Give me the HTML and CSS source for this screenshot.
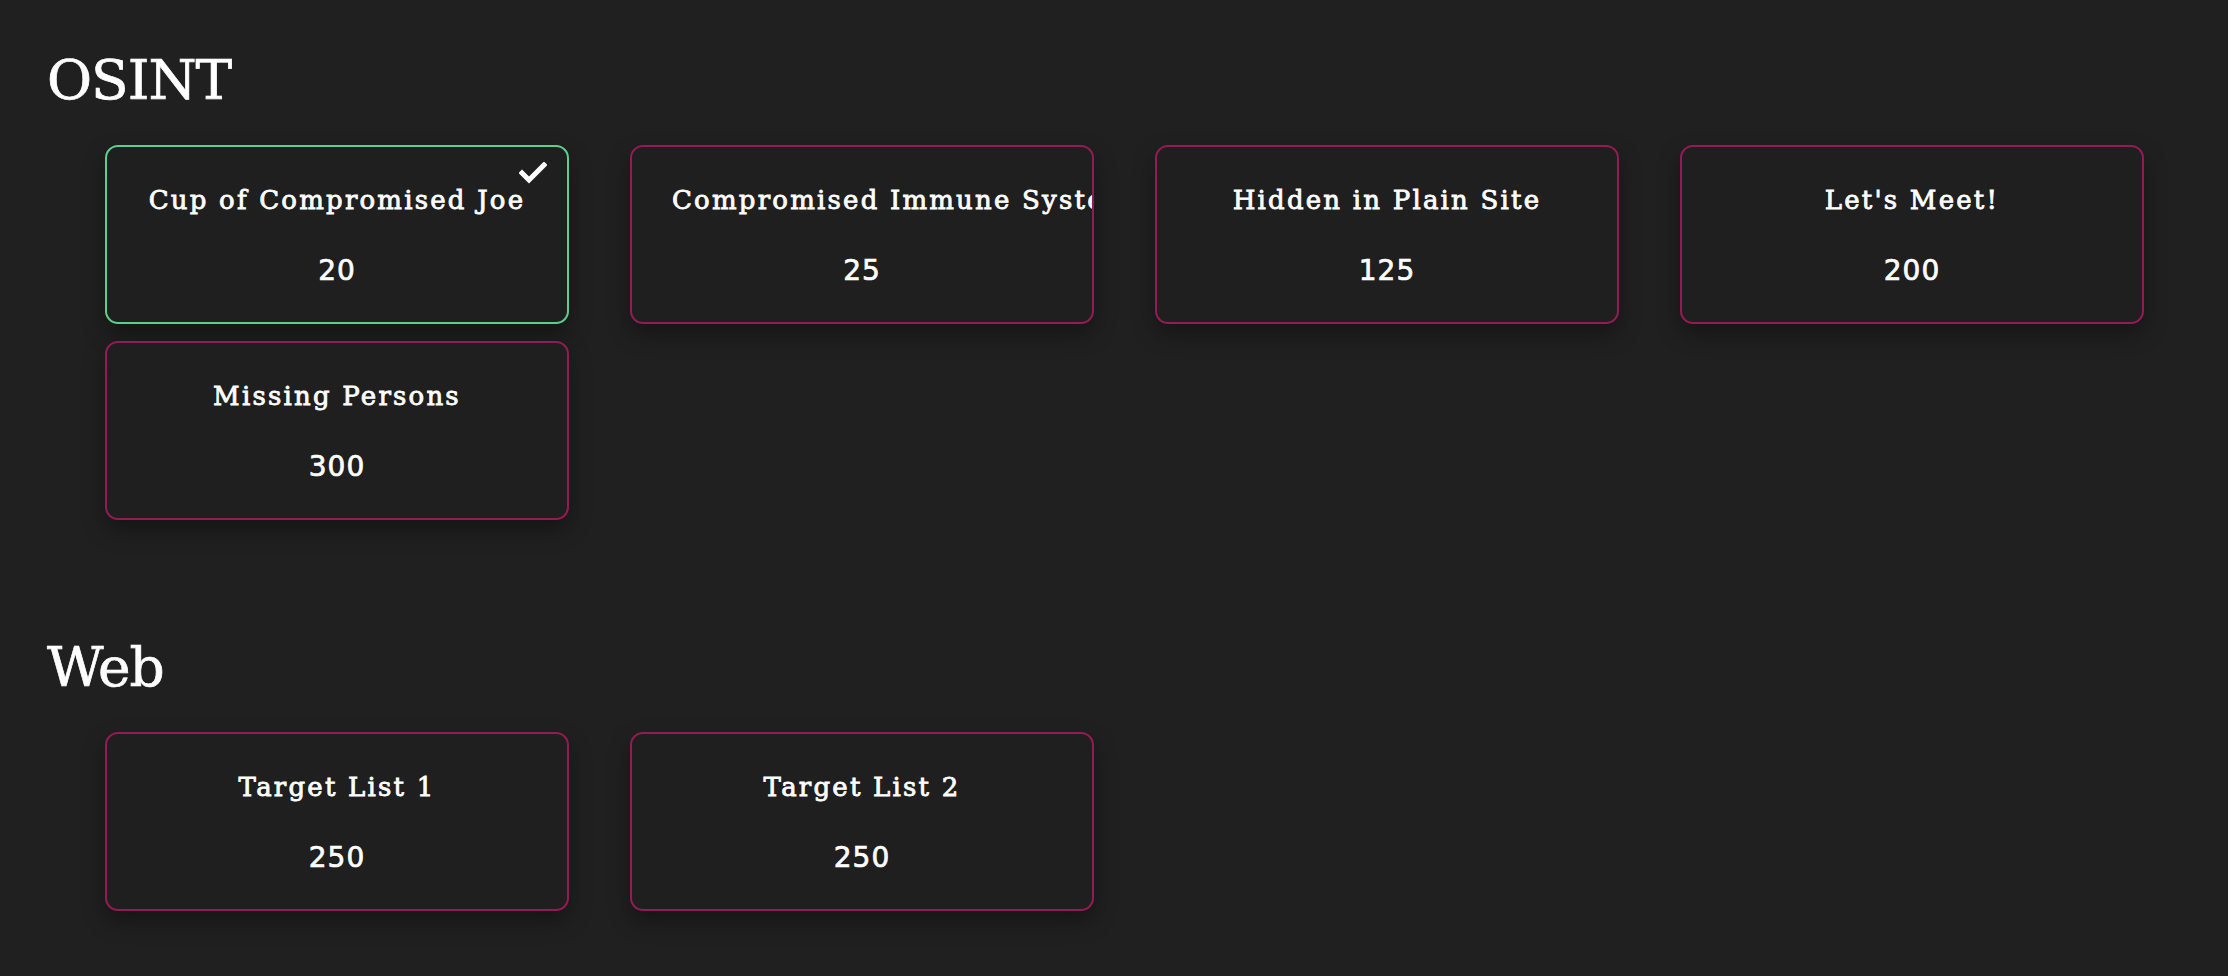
FILE: index.html
```html
<!DOCTYPE html>
<html lang="en">
<head>
<meta charset="utf-8">
<title>Challenges</title>
<link rel="stylesheet" href="styles.css">
</head>
<body>
<main class="board">
  <section class="category">
    <h2 class="category-title">OSINT</h2>
    <div class="grid">
      <div class="card solved">
        <svg class="check" viewBox="0 0 28 22" aria-hidden="true"><polyline points="3,11 10,18 25,3" fill="none" stroke="#ffffff" stroke-width="5" stroke-linecap="square"/></svg>
        <div class="card-name">Cup of Compromised Joe</div>
        <div class="card-points">20</div>
      </div>
      <div class="card">
        <div class="card-name">Compromised Immune System</div>
        <div class="card-points">25</div>
      </div>
      <div class="card">
        <div class="card-name">Hidden in Plain Site</div>
        <div class="card-points">125</div>
      </div>
      <div class="card">
        <div class="card-name">Let's Meet!</div>
        <div class="card-points">200</div>
      </div>
      <div class="card">
        <div class="card-name">Missing Persons</div>
        <div class="card-points">300</div>
      </div>
    </div>
  </section>
  <section class="category">
    <h2 class="category-title">Web</h2>
    <div class="grid">
      <div class="card">
        <div class="card-name">Target List 1</div>
        <div class="card-points">250</div>
      </div>
      <div class="card">
        <div class="card-name">Target List 2</div>
        <div class="card-points">250</div>
      </div>
    </div>
  </section>
</main>
</body>
</html>
```

FILE: styles.css
```css
html, body {
  margin: 0;
  padding: 0;
  background: #202020;
  color: #ffffff;
}

body {
  height: 976px;
  overflow: hidden;
}

.board {
  padding: 47px 0 0 47px;
}

.category {
  margin-bottom: 114px;
}

.category:last-child {
  margin-bottom: 0;
}

.category-title {
  margin: 0 0 32px 0;
  font-family: "DejaVu Serif", "Liberation Serif", serif;
  font-weight: normal;
  font-size: 55px;
  line-height: 66px;
  letter-spacing: -1px;
  -webkit-text-stroke: 0.7px #ffffff;
}

.grid {
  display: grid;
  grid-template-columns: repeat(4, 464px);
  column-gap: 61px;
  row-gap: 17px;
  margin-left: 58px;
}

.card {
  position: relative;
  box-sizing: border-box;
  height: 179px;
  padding: 38px 40px 35px;
  border: 2px solid #951b56;
  border-radius: 13px;
  background: #1f1f1f;
  box-shadow: 0 10px 22px rgba(0, 0, 0, 0.35);
  overflow: hidden;
  text-align: center;
  display: flex;
  flex-direction: column;
  gap: 41px;
}

.card.solved {
  border-color: #5ccf8b;
}

.card-name {
  font-family: "DejaVu Serif", "Liberation Serif", serif;
  font-weight: normal;
  font-size: 26px;
  line-height: 30px;
  letter-spacing: 2.2px;
  white-space: nowrap;
  -webkit-text-stroke: 0.8px #ffffff;
}

.card-points {
  font-family: "DejaVu Sans", "Liberation Sans", sans-serif;
  font-weight: normal;
  font-size: 28px;
  line-height: 30px;
  letter-spacing: 1px;
  -webkit-text-stroke: 0.7px #ffffff;
}

.check {
  position: absolute;
  top: 15px;
  right: 20px;
  width: 28px;
  height: 22px;
}
```
